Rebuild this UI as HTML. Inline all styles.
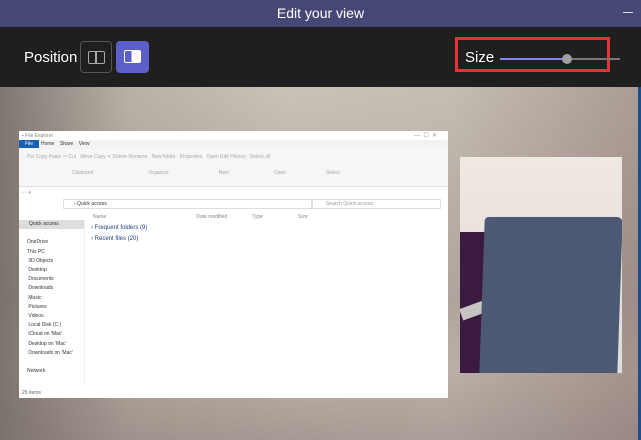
<!DOCTYPE html><html><head><style>
*{margin:0;padding:0;box-sizing:border-box}
body{width:641px;height:440px;overflow:hidden;font-family:"Liberation Sans",sans-serif;background:#1f1f1f;position:relative}
.title{position:absolute;left:0;top:0;width:641px;height:27px;background:#464775;color:#fff;font-size:14px;text-align:center;line-height:27px}
.min{position:absolute;right:8px;top:12px;width:10px;height:1px;background:#ddd}
.bar{position:absolute;top:27px;left:0;width:641px;height:60px;background:#1f1f1f;color:#fff}
.bg{position:absolute;top:87px;left:0;width:641px;height:353px;background:
linear-gradient(90deg,rgba(120,110,105,.9) 0%,rgba(160,150,140,.4) 20%,rgba(200,190,175,.2) 45%,rgba(190,180,170,.4) 70%,rgba(150,130,125,.6) 100%),
linear-gradient(180deg,#c9c3b9 0%,#b8aea6 30%,#a79a95 60%,#b9aca5 80%,#9d908c 100%)}
.exp{position:absolute;left:19px;top:131px;width:429px;height:267px;background:#fff;font-size:5px;color:#333}
.cam{position:absolute;left:460px;top:157px;width:162px;height:216px;background:linear-gradient(180deg,#efe9e1 0%,#e8e2da 40%,#ddd 100%);overflow:hidden}
.pillow{position:absolute;left:22px;top:60px;width:138px;height:160px;background:#4d5873;transform:skew(-2deg);border-radius:4px 6px 0 0}
.purple{position:absolute;left:0;top:75px;width:40px;height:141px;background:#3a1a3e}
.stripe{position:absolute;left:0;top:145px;width:40px;height:12px;background:#c8c4c6;transform:rotate(-20deg)}
</style></head><body>
<div class="title">Edit your view<div class="min"></div></div>
<div class="bar">
<div style="position:absolute;left:24px;top:22px;font-size:15px">Position</div>
<div style="position:absolute;left:80px;top:14px;width:32px;height:32px;border:1px solid #555;border-radius:4px"><div style="position:absolute;left:7px;top:9px;width:17px;height:13px;border:1.5px solid #aaa;border-radius:2px"><div style="position:absolute;left:6px;top:0;width:1.5px;height:100%;background:#aaa"></div></div></div>
<div style="position:absolute;left:116px;top:14px;width:33px;height:32px;background:#5b5fc7;border-radius:4px"><div style="position:absolute;left:8px;top:9px;width:17px;height:13px;border:1.5px solid #fff;border-radius:2px;background:linear-gradient(90deg,transparent 45%,#fff 45%)"></div></div>
<div style="position:absolute;left:455px;top:10px;width:155px;height:35px;border:3px solid #e53232"></div>
<div style="position:absolute;left:465px;top:22px;font-size:15px">Size</div>
<div style="position:absolute;left:500px;top:31px;width:67px;height:2px;background:#7f85f5"></div>
<div style="position:absolute;left:567px;top:31px;width:53px;height:2px;background:#777"></div>
<div style="position:absolute;left:562px;top:27px;width:10px;height:10px;border-radius:50%;background:#a0a0a0"></div>
</div>
<div class="bg"></div>
<div style="position:absolute;left:638px;top:87px;width:3px;height:353px;background:#1d4e8c"></div>
<div class="exp">
<div style="position:absolute;left:3px;top:2px;color:#888">▪ File Explorer</div>
<div style="position:absolute;left:395px;top:1px;color:#999;font-size:6px">—&nbsp;&nbsp;☐&nbsp;&nbsp;✕</div>
<div style="position:absolute;left:0;top:9px;width:429px;height:9px;background:#f3f3f3"></div>
<div style="position:absolute;left:0;top:9px;width:20px;height:8px;background:#1a5fb4;color:#fff;text-align:center;line-height:8px">File</div>
<div style="position:absolute;left:22px;top:10px">Home&nbsp;&nbsp;&nbsp;&nbsp;Share&nbsp;&nbsp;&nbsp;&nbsp;View</div>
<div style="position:absolute;left:0;top:18px;width:429px;height:38px;background:#f5f6f7;border-bottom:1px solid #e0e0e0"></div>
<div style="position:absolute;left:8px;top:22px;color:#aaa;line-height:8px">Pin Copy Paste ✂ Cut &nbsp; Move Copy ✕ Delete Rename &nbsp; New folder &nbsp; Properties &nbsp; Open Edit History &nbsp; Select all<br>&nbsp;<br><span style="margin-left:45px">Clipboard</span><span style="margin-left:55px">Organize</span><span style="margin-left:50px">New</span><span style="margin-left:45px">Open</span><span style="margin-left:40px">Select</span></div>
<div style="position:absolute;left:3px;top:59px;color:#999">▫ ▫ ▾</div>
<div style="position:absolute;left:44px;top:68px;width:250px;height:10px;border:1px solid #ddd;line-height:8px;padding-left:10px">› Quick access</div>
<div style="position:absolute;left:292px;top:68px;width:130px;height:10px;border:1px solid #ddd;line-height:8px;padding-left:14px;color:#999">Search Quick access</div>
<div style="position:absolute;left:0;top:89px;width:66px;height:165px;border-right:1px solid #eee;line-height:9.2px;padding-left:8px">
<div style="background:#ddd;margin-left:-8px;padding-left:10px">Quick access</div><br>OneDrive<br>This PC<br>&nbsp;3D Objects<br>&nbsp;Desktop<br>&nbsp;Documents<br>&nbsp;Downloads<br>&nbsp;Music<br>&nbsp;Pictures<br>&nbsp;Videos<br>&nbsp;Local Disk (C:)<br>&nbsp;iCloud on 'Mac'<br>&nbsp;Desktop on 'Mac'<br>&nbsp;Downloads on 'Mac'<br><br>Network</div>
<div style="position:absolute;left:74px;top:83px;color:#888">Name<span style="margin-left:90px">Date modified</span><span style="margin-left:25px">Type</span><span style="margin-left:35px">Size</span></div>
<div style="position:absolute;left:72px;top:94px;color:#1e3f8a;font-size:6px">› Frequent folders (9)</div>
<div style="position:absolute;left:72px;top:105px;color:#1e3f8a;font-size:6px">› Recent files (20)</div>
<div style="position:absolute;left:3px;top:259px;color:#666">29 items</div>
</div>
<div class="cam"><div class="purple"></div><div class="stripe"></div><div class="pillow"></div></div>
</body></html>
